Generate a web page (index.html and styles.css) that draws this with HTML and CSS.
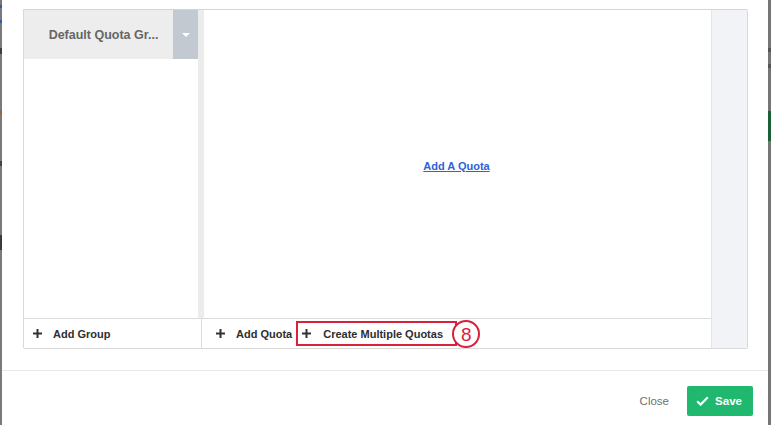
FILE: index.html
```html
<!DOCTYPE html>
<html>
<head>
<meta charset="utf-8">
<link rel="stylesheet" href="styles.css">
</head>
<body>
<div class="bg-strip bg-left"></div>
<div class="modal">
  <div class="modal-body">
    <div class="panel">
      <div class="panel-main">
        <div class="panel-top">
          <div class="groups">
            <div class="group-header">
              <div class="group-name">Default Quota Gr...</div>
              <div class="group-drop"><span class="caret"></span></div>
            </div>
            <div class="group-list"></div>
          </div>
          <div class="divider"></div>
          <div class="quota-area">
            <a class="add-link" href="#">Add A Quota</a>
          </div>
        </div>
        <div class="panel-footer">
          <div class="foot-cell foot-left">
            <button class="tool-btn"><svg class="plus" width="9" height="9" viewBox="0 0 9 9"><rect x="3.5" y="0" width="2" height="9"/><rect x="0" y="3.5" width="9" height="2"/></svg><span>Add Group</span></button>
          </div>
          <div class="foot-cell foot-right">
            <button class="tool-btn"><svg class="plus" width="9" height="9" viewBox="0 0 9 9"><rect x="3.5" y="0" width="2" height="9"/><rect x="0" y="3.5" width="9" height="2"/></svg><span>Add Quota</span></button>
            <button class="tool-btn highlight"><svg class="plus" width="9" height="9" viewBox="0 0 9 9"><rect x="3.5" y="0" width="2" height="9"/><rect x="0" y="3.5" width="9" height="2"/></svg><span>Create Multiple Quotas</span><span class="badge">8</span></button>
          </div>
        </div>
      </div>
      <div class="panel-side"></div>
    </div>
  </div>
  <div class="modal-footer">
    <button class="close-btn">Close</button>
    <button class="save-btn"><svg width="13" height="10" viewBox="0 0 13 10"><polyline points="1.2,5.2 4.6,8.6 11.8,1.2" fill="none" stroke="#fff" stroke-width="2.2"/></svg><span>Save</span></button>
  </div>
</div>
<div class="bg-strip bg-right"></div>
</body>
</html>
```

FILE: styles.css
```css
html, body {
  margin: 0;
  padding: 0;
}
body {
  display: flex;
  width: 771px;
  height: 425px;
  overflow: hidden;
  background: #fff;
  font-family: "Liberation Sans", Arial, sans-serif;
}
.bg-strip {
  flex: none;
  height: 425px;
}
.bg-left {
  width: 2px;
  background: linear-gradient(to bottom,
    #7a7a7a 0, #7a7a7a 5px, #2f5f9e 5px, #2f5f9e 8px,
    #7a7a7a 8px, #7a7a7a 20px, #2f5f9e 20px, #2f5f9e 23px,
    #7a7a7a 23px, #7a7a7a 48px, #3f3f3f 48px, #3f3f3f 54px,
    #7a7a7a 54px, #7a7a7a 110px, #8c6a4e 110px, #8c6a4e 115px,
    #7a7a7a 115px, #7a7a7a 161px, #444 161px, #444 166px,
    #7a7a7a 166px, #7a7a7a 235px, #3a3a3a 235px, #3a3a3a 250px,
    #7a7a7a 250px, #7a7a7a 100%);
}
.bg-right {
  width: 3px;
  background: linear-gradient(to bottom,
    #767676 0, #767676 48px, #555 48px, #555 52px,
    #767676 52px, #767676 64px, #555 64px, #555 68px,
    #767676 68px, #767676 111px, #1b5f37 111px, #1b5f37 141px,
    #767676 141px, #767676 100%);
}
.modal {
  flex: 1;
  display: flex;
  flex-direction: column;
  background: #fff;
}
.modal-body {
  padding: 9px 20px 21px 21px;
  border-bottom: 1px solid #e9e9e9;
}
.panel {
  display: flex;
  width: 723px;
  height: 338px;
  border: 1px solid #d9d9d9;
  border-top-color: #d4d4d4;
  border-radius: 0 2px 2px 2px;
}
.panel-main {
  width: 687px;
  display: flex;
  flex-direction: column;
}
.panel-side {
  width: 35px;
  background: #f2f3f7;
  border-left: 1px solid #e3e5ea;
}
.panel-top {
  flex: 1;
  display: flex;
}
.groups {
  width: 174px;
  display: flex;
  flex-direction: column;
}
.group-header {
  height: 49px;
  display: flex;
  background: #ededed;
}
.group-name {
  flex: 1;
  display: flex;
  align-items: center;
  justify-content: center;
  padding-left: 10px;
  font-size: 12.5px;
  font-weight: bold;
  color: #666;
}
.group-drop {
  width: 25px;
  background: #c2c9d1;
  display: flex;
  align-items: center;
  justify-content: center;
}
.caret {
  width: 0;
  height: 0;
  border-left: 4px solid transparent;
  border-right: 4px solid transparent;
  border-top: 4px solid #fff;
  margin-left: 1px;
}
.group-list {
  flex: 1;
}
.divider {
  width: 6px;
  background: #ececec;
}
.quota-area {
  flex: 1;
  display: flex;
  align-items: center;
  justify-content: center;
  padding-top: 4px;
  padding-right: 2px;
}
.add-link {
  font-size: 11px;
  font-weight: bold;
  color: #2b63d8;
  text-decoration: underline;
}
.panel-footer {
  height: 29px;
  display: flex;
  border-top: 1px solid #dcdcdc;
}
.foot-cell {
  display: flex;
  align-items: center;
}
.foot-left {
  width: 178px;
  border-right: 1px solid #dcdcdc;
  padding-left: 9px;
  box-sizing: border-box;
}
.foot-right {
  flex: 1;
  padding-left: 14px;
}
.tool-btn {
  display: flex;
  align-items: center;
  border: none;
  background: none;
  padding: 0;
  margin: 0;
  font-family: "Liberation Sans", Arial, sans-serif;
  font-size: 11px;
  font-weight: bold;
  color: #2e2e2e;
  height: 25px;
}
.tool-btn .plus {
  fill: #333;
  margin-right: 11px;
}
.tool-btn.highlight {
  position: relative;
  margin-left: 4px;
  border: 2px solid #d6223a;
  padding: 0 12px 0 4px;
  height: 25px;
  box-sizing: border-box;
  width: 161px;
}
.tool-btn.highlight .plus {
  margin-right: 12px;
}
.badge {
  position: absolute;
  right: -25px;
  top: -3px;
  width: 24px;
  height: 24px;
  border: 2px solid #d6223a;
  border-radius: 50%;
  background: #fff;
  color: #d6223a;
  font-family: "Liberation Sans", Arial, sans-serif;
  font-weight: normal;
  font-size: 19px;
  display: flex;
  align-items: center;
  justify-content: center;
  line-height: 1;
}
.modal-footer {
  flex: 1;
  display: flex;
  align-items: flex-start;
  justify-content: flex-end;
  padding: 15px 15px 0 0;
}
.close-btn {
  border: none;
  background: none;
  font-family: "Liberation Sans", Arial, sans-serif;
  font-size: 11.5px;
  color: #707070;
  height: 30px;
  padding: 0;
  margin-right: 18px;
}
.save-btn {
  display: flex;
  align-items: center;
  justify-content: center;
  width: 66px;
  height: 30px;
  border: none;
  border-radius: 2px;
  background: #1fb86e;
  color: #fff;
  font-family: "Liberation Sans", Arial, sans-serif;
  font-size: 11.5px;
  font-weight: bold;
  padding: 0 2px 0 0;
}
.save-btn svg {
  margin-right: 6px;
}
```
